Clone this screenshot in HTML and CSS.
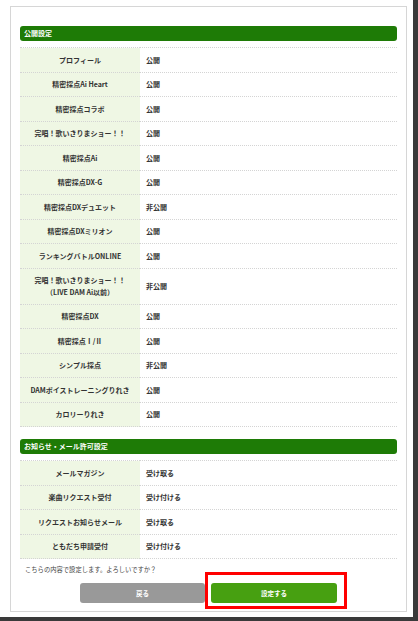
FILE: index.html
```html
<!DOCTYPE html>
<html lang="ja">
<head>
  <meta charset="UTF-8">
  <meta name="viewport" content="width=device-width, initial-scale=1.0">
  <title>公開設定</title>
  <link rel="stylesheet" href="styles.css">
</head>
<body>
  <div class="screen">
    <div class="sheet">
      <h3 class="sec-title">公開設定</h3>
      <table class="setting">
        <tr><th>プロフィール</th><td>公開</td></tr>
        <tr><th>精密採点Ai Heart</th><td>公開</td></tr>
        <tr><th>精密採点コラボ</th><td>公開</td></tr>
        <tr><th>完唱！歌いきりまショー！！</th><td>公開</td></tr>
        <tr><th>精密採点Ai</th><td>公開</td></tr>
        <tr><th>精密採点DX-G</th><td>公開</td></tr>
        <tr><th>精密採点DXデュエット</th><td>非公開</td></tr>
        <tr><th>精密採点DXミリオン</th><td>公開</td></tr>
        <tr><th>ランキングバトルONLINE</th><td>公開</td></tr>
        <tr class="tall"><th>完唱！歌いきりまショー！！<br>（LIVE DAM Ai以前）</th><td>非公開</td></tr>
        <tr><th>精密採点DX</th><td>公開</td></tr>
        <tr><th>精密採点Ⅰ/Ⅱ</th><td>公開</td></tr>
        <tr><th>シンプル採点</th><td>非公開</td></tr>
        <tr><th>DAMボイストレーニングりれき</th><td>公開</td></tr>
        <tr><th>カロリーりれき</th><td>公開</td></tr>
      </table>

      <h3 class="sec-title">お知らせ・メール許可設定</h3>
      <table class="setting">
        <tr><th>メールマガジン</th><td>受け取る</td></tr>
        <tr><th>楽曲リクエスト受付</th><td>受け付ける</td></tr>
        <tr><th>リクエストお知らせメール</th><td>受け取る</td></tr>
        <tr><th>ともだち申請受付</th><td>受け付ける</td></tr>
      </table>

      <p class="confirm">こちらの内容で設定します。よろしいですか？</p>
      <div class="actions">
        <button class="btn btn-back">戻る</button>
        <span class="mark"><button class="btn btn-submit">設定する</button></span>
      </div>
    </div>
  </div>
</body>
</html>
```

FILE: styles.css
```css
body {
  margin: 0;
  padding: 0;
  background: #fff;
  font-family: "Noto Sans CJK JP", "Noto Sans", sans-serif;
  color: #333;
}

.screen {
  width: 418px;
  height: 621px;
  box-sizing: border-box;
  border-right: 5px solid #3a3a3a;
  border-bottom: 4px solid #3a3a3a;
  overflow: hidden;
}

.sheet {
  width: 397px;
  height: 606px;
  margin: 6px 0 0 10px;
  box-sizing: border-box;
  border: 1px solid #d6d6d6;
  padding: 19px 9px 0 9px;
}

.sec-title {
  margin: 0;
  height: 15px;
  line-height: 15px;
  padding-left: 4px;
  background: #1e7b06;
  border-radius: 3px;
  color: #fff;
  font-size: 7px;
  font-weight: bold;
}

.setting {
  width: 100%;
  border-collapse: collapse;
  margin: 6px 0 12px;
  font-size: 7px;
  font-weight: bold;
}

.setting th, .setting td {
  height: 23.5px;
  padding: 0 6px;
  line-height: 12px;
  border-top: 1px dotted #d4d4d4;
  border-bottom: 1px dotted #d4d4d4;
}

.setting th {
  width: 108px;
  background: #eff7e4;
  text-align: center;
  font-weight: bold;
}

.setting td {
  text-align: left;
}

.setting .tall th, .setting .tall td {
  height: 35px;
}

.confirm {
  margin: -6px 0 0 5px;
  font-size: 6.3px;
  color: #444;
}

.actions {
  display: flex;
  justify-content: center;
  gap: 6px;
  margin-top: 9px;
}

.btn {
  width: 125px;
  height: 20px;
  border: none;
  border-radius: 3px;
  color: #fff;
  font-family: inherit;
  font-size: 6.5px;
  font-weight: bold;
  padding: 0;
}

.btn-back {
  background: #999;
}

.btn-submit {
  width: 126px;
  background: #47a011;
  display: block;
}

/* red highlight frame over the submit button */
.mark {
  position: relative;
}

.mark::after {
  content: "";
  position: absolute;
  left: -6px;
  top: -11px;
  right: -10px;
  bottom: -6px;
  border: 3px solid #f00;
}
```
